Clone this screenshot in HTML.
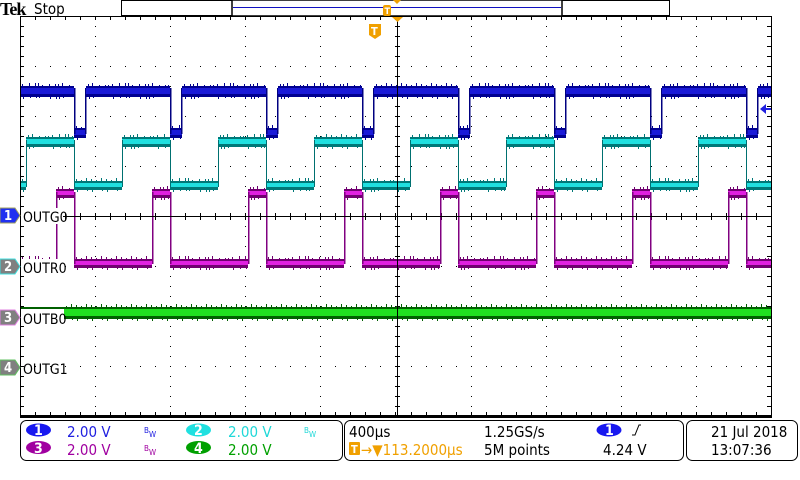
<!DOCTYPE html>
<html><head><meta charset="utf-8"><style>
html,body{margin:0;padding:0;background:#fff;width:800px;height:480px;overflow:hidden}
svg{display:block}
text{font-family:"DejaVu Sans Condensed","Liberation Sans",sans-serif}
</style></head><body>
<svg id="s" width="800" height="480" viewBox="0 0 800 480" xmlns="http://www.w3.org/2000/svg">
<rect width="800" height="480" fill="#fff"/>
<g id="grid"></g>
<g id="waves"></g>
<line x1="20" y1="216.5" x2="771" y2="216.5" stroke="#000" stroke-width="1"/>
<line x1="397.5" y1="16" x2="397.5" y2="417" stroke="#000" stroke-width="1"/>
<path d="M20.5 16 V417.5 H771.5 V16" fill="none" stroke="#000" stroke-width="1"/>
<line x1="20" y1="416.5" x2="772" y2="416.5" stroke="#000" stroke-width="3"/>
<line x1="20" y1="16.5" x2="772" y2="16.5" stroke="#000" stroke-width="1"/>
<text x="0" y="15" font-weight="bold" font-size="18" style="font-family:'Liberation Serif',serif;letter-spacing:-1px">Tek</text>
<text x="34" y="14" font-size="15">Stop</text>
<rect x="121.5" y="0.5" width="548" height="15" fill="#fff" stroke="#000"/>
<rect x="232" y="0" width="330" height="16" fill="#fff" stroke="#000" stroke-width="1.5"/>
<line x1="233" y1="7.5" x2="561" y2="7.5" stroke="#1010c0" stroke-width="1"/>
<rect x="383" y="5" width="8" height="11" rx="2" fill="#f0a000"/>
<text x="384.5" y="14" font-size="9" fill="#fff" font-weight="bold">T</text>
<path d="M393 0 H401 L397 4Z" fill="#f0a000"/>
<path d="M392 17 H403 L397.5 22Z" fill="#f0a000"/>
<path d="M369 24 H381 V35 L375 39 L369 35Z" fill="#f0a000"/>
<text x="371" y="35" font-size="11" fill="#fff" font-weight="bold">T</text>
<path d="M760 109 L766 104 V108 H771 V110 H766 V114Z" fill="#2020e0"/>
<g font-size="13" font-weight="bold">
<path d="M0 208 H15 L20 215.5 L15 223 H0Z" fill="#2030f0" stroke="#a0a060"/><text x="4" y="220" fill="#fff">1</text>
<path d="M0 259 H15 L20 266.5 L15 274 H0Z" fill="#808080" stroke="#40e0e0"/><text x="4" y="271" fill="#fff">2</text>
<path d="M0 310 H15 L20 317.5 L15 325 H0Z" fill="#808080" stroke="#e080e0"/><text x="4" y="322" fill="#fff">3</text>
<path d="M0 360 H15 L20 367.5 L15 375 H0Z" fill="#808080" stroke="#60c060"/><text x="4" y="372" fill="#fff">4</text>
</g>
<g font-size="14">
<rect x="21" y="208" width="42" height="16" fill="#fff"/><text x="23" y="222">OUTG0</text>
<rect x="21" y="259" width="42" height="16" fill="#fff"/><text x="23" y="273">OUTR0</text>
<rect x="21" y="310" width="42" height="16" fill="#fff"/><text x="23" y="324">OUTB0</text>
<text x="23" y="374">OUTG1</text>
</g>
<rect x="20.5" y="420.5" width="322" height="40" rx="6" fill="#fff" stroke="#000"/>
<rect x="344.5" y="420.5" width="339" height="40" rx="6" fill="#fff" stroke="#000"/>
<rect x="686.5" y="420.5" width="111" height="40" rx="6" fill="#fff" stroke="#000"/>
<g font-size="15">
<ellipse cx="38.5" cy="430" rx="12.5" ry="6.5" fill="#1818f0"/><text x="34" y="435" fill="#fff" font-weight="bold" font-size="14">1</text>
<text x="67" y="437" fill="#2020e0">2.00 V</text>
<text x="144" y="433" font-size="8" fill="#2020e0">B</text><text x="149" y="437" font-size="8" fill="#2020e0">W</text>
<ellipse cx="198.5" cy="430" rx="12.5" ry="6.5" fill="#20e0e0"/><text x="194" y="435" fill="#fff" font-weight="bold" font-size="14">2</text>
<text x="228" y="437" fill="#20d8d8">2.00 V</text>
<text x="304" y="433" font-size="8" fill="#20d8d8">B</text><text x="309" y="437" font-size="8" fill="#20d8d8">W</text>
<ellipse cx="38.5" cy="447.5" rx="12.5" ry="6.5" fill="#a000a0"/><text x="34" y="453" fill="#fff" font-weight="bold" font-size="14">3</text>
<text x="67" y="455" fill="#a000a0">2.00 V</text>
<text x="144" y="451" font-size="8" fill="#a000a0">B</text><text x="149" y="455" font-size="8" fill="#a000a0">W</text>
<ellipse cx="198.5" cy="447.5" rx="12.5" ry="6.5" fill="#00a000"/><text x="194" y="453" fill="#fff" font-weight="bold" font-size="14">4</text>
<text x="228" y="455" fill="#00a000">2.00 V</text>
<text x="349" y="437">400µs</text>
<rect x="349" y="442" width="11" height="13" rx="1" fill="#f0a000"/><text x="351" y="453" font-size="11" fill="#fff" font-weight="bold">T</text>
<text x="361" y="455" fill="#f0a000">→▼113.2000µs</text>
<text x="484" y="437">1.25GS/s</text>
<text x="484" y="455">5M points</text>
<ellipse cx="609" cy="430" rx="12.5" ry="6.5" fill="#1818f0"/><text x="605" y="435" fill="#fff" font-weight="bold" font-size="14">1</text>
<path d="M632 435 L635 435 L639 425 L641 425" fill="none" stroke="#000" stroke-width="1"/>
<text x="603" y="455">4.24 V</text>
<text x="711" y="437">21 Jul  2018</text>
<text x="711" y="455">13:07:36</text>
</g>
</svg>
<script>
var NS="http://www.w3.org/2000/svg";
function el(p,t,a){var e=document.createElementNS(NS,t);for(var k in a)e.setAttribute(k,a[k]);p.appendChild(e);return e;}
var g=document.getElementById('grid'),w=document.getElementById('waves');
var X0=20,X1=771,Y0=16,Y1=416,dx=(X1-X0)/10,dy=(Y1-Y0)/8;
var d="";
for(var i=1;i<10;i++){var x=Math.round(X0+i*dx);for(var y=Y0+dy/5;y<Y1;y+=dy/5){d+="M"+x+" "+Math.round(y)+"h1v1h-1z";}}
for(var j=1;j<8;j++){var y=Math.round(Y0+j*dy);for(var x=X0+dx/5;x<X1;x+=dx/5){d+="M"+Math.round(x)+" "+y+"h1v1h-1z";}}
for(var x=X0+dx/5;x<X1;x+=dx/5){var xx=Math.round(x);d+="M"+xx+" 213h1v7h-1zM"+xx+" 17h1v3h-1zM"+xx+" 412h1v4h-1z";}
for(var y=Y0+dy/5;y<Y1;y+=dy/5){var yy=Math.round(y);d+="M395 "+yy+"h5v1h-5zM21 "+yy+"h3v1h-3zM767 "+yy+"h4v1h-4z";}
el(g,'path',{d:d,fill:'#000'});
function band(y1,y2,xa,xb,dark,core,spk){
  el(w,'rect',{x:xa,y:y1,width:xb-xa,height:y2-y1,fill:dark});
  el(w,'rect',{x:xa,y:y1+2,width:xb-xa,height:Math.max(1,(y2-y1)-5),fill:core});
  var s="";for(var x=xa+2;x<xb-1;x+=3+((x*7)%5)){var h=1+((x*13)%3);s+="M"+x+" "+(y1-h)+"h1v"+h+"h-1zM"+(x+1)+" "+y2+"h1v"+(((x*11)%3))+"h-1z";}
  el(w,'path',{d:s,fill:dark});
}
for(var k=-1;k<9;k++){
  var o=96*k,a,b;
  a=Math.max(20,86+o-96);b=Math.min(771,74+o);
  if(b>a)band(86,97,a,b,'#000090','#1a1ad8');
  a=Math.max(20,74+o);b=Math.min(771,86+o);
  if(b>a)band(128,138,a,b,'#000090','#1a1ad8');
  if(74+o>20&&74+o<771)el(w,'rect',{x:74+o,y:88,width:1.5,height:46,fill:'#000080'});
  if(86+o>20&&86+o<771)el(w,'rect',{x:85+o,y:88,width:1.5,height:46,fill:'#000080'});
  a=Math.max(20,26+o);b=Math.min(771,74+o);
  if(b>a)band(137,147,a,b,'#007878','#20e0e0');
  a=Math.max(20,74+o);b=Math.min(771,122+o);
  if(b>a)band(181,190,a,b,'#007878','#20e0e0');
  if(26+o>20&&26+o<771)el(w,'rect',{x:26+o,y:140,width:1,height:47,fill:'#007070'});
  if(74+o>20&&74+o<771)el(w,'rect',{x:74+o,y:140,width:1,height:47,fill:'#007070'});
  a=Math.max(20,56+o);b=Math.min(771,74+o);
  if(b>a)band(189,198,a,b,'#700070','#e020e0');
  a=Math.max(20,74+o);b=Math.min(771,152+o);
  if(b>a)band(259,268,a,b,'#700070','#e020e0');
  if(56+o>20&&56+o<771)el(w,'rect',{x:56+o,y:192,width:1.5,height:72,fill:'#800080'});
  if(74+o>20&&74+o<771)el(w,'rect',{x:74+o,y:192,width:1.5,height:72,fill:'#800080'});
}
band(307,319,64,771,'#006000','#20e020');
el(w,'rect',{x:21,y:307,width:43,height:2,fill:'#006000'});
</script>
</body></html>
